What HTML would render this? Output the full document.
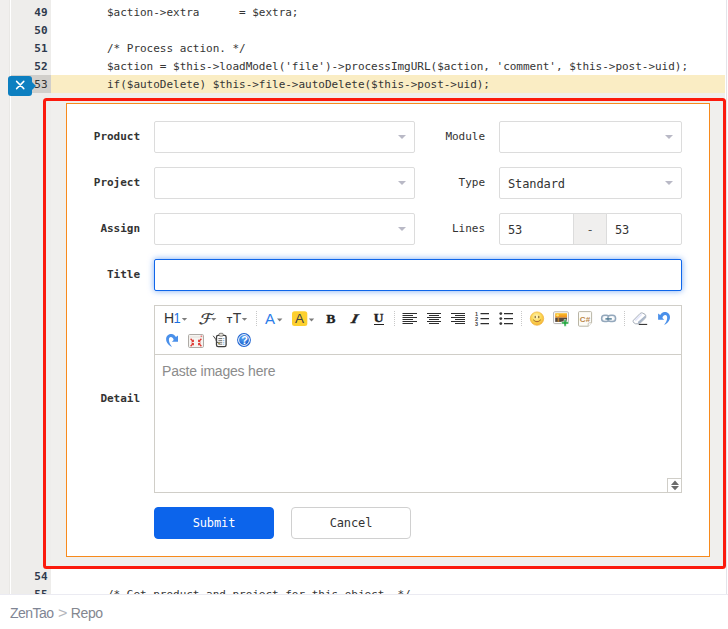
<!DOCTYPE html>
<html lang="en">
<head>
<meta charset="utf-8">
<title>ZenTao Repo</title>
<style>
*{box-sizing:border-box;margin:0;padding:0}
html,body{width:728px;height:629px;overflow:hidden;background:#fff}
body{position:relative;font-family:"DejaVu Sans Mono","Liberation Mono",monospace;font-size:11px;letter-spacing:-0.02px;color:#333}
.abs{position:absolute}
#code{position:absolute;left:0;top:0;width:728px;height:595px;overflow:hidden;background:#fff}
#strip{position:absolute;left:0;top:0;width:10px;height:595px;background:#f0efed;border-right:1px solid #e9e8e5}
#gutter{position:absolute;left:11px;top:0;width:40px;height:595px;background:#eeedeb}
#rborder{position:absolute;left:726px;top:0;width:1px;height:595px;background:#e4e4ea}
#bborder{position:absolute;left:0;top:594px;width:728px;height:1px;background:#ebebf2}
.row{position:absolute;left:0;width:725px;height:18px;line-height:18px;white-space:pre}
.row .n{position:absolute;left:11px;width:40px;padding-right:3.5px;text-align:right;font-weight:bold;color:#2e3a4d;height:18px;line-height:20px;overflow:hidden}
.row .c{position:absolute;left:107px;top:1px;color:#353535}
.row.hl .n{background:#d1cfcb;font-weight:normal;color:#333}
.row.hl .bg{position:absolute;left:51px;top:0;width:674px;height:18px;background:#faedc4}
#close{position:absolute;left:8px;top:76px;width:24px;height:20px;background:#0d7fc0;border-radius:3px}
#close:after{content:"";position:absolute;left:24px;top:6px;border-left:4px solid #0d7fc0;border-top:4px solid transparent;border-bottom:4px solid transparent}
#widget{position:absolute;left:51px;top:93px;width:674px;height:474px;background:#f0efed}
#red{position:absolute;left:43px;top:98px;width:683px;height:471px;border:3px solid #fb1a0d;border-radius:3.5px}
#form{position:absolute;left:66px;top:103px;width:644px;height:454px;background:#fff;border:1px solid #f78a1c}
.lbl{position:absolute;text-align:right;height:32px;line-height:31px;color:#333}
.ctl{position:absolute;height:32px;border:1px solid #dcdcdc;border-radius:2px;background:#fff;line-height:32px;padding-left:8px;color:#333;font-size:12px;letter-spacing:-0.1px}
.caret{position:absolute;right:8px;top:13px;border-top:4px solid #b9b9c6;border-left:4px solid transparent;border-right:4px solid transparent}
.lbl.b{font-weight:bold}
.lbl{font-weight:normal}
.ctl.addon{background:#f0efee;border-radius:0;padding:0;text-align:center;color:#555}
.ctl.title{border-color:#0f66ea;box-shadow:0 0 6px rgba(12,100,235,.55)}
#editor{position:absolute;left:154px;top:305px;width:528px;height:188px;border:1px solid #d0cec8;background:#fff}
#tb{position:absolute;left:0;top:0;width:526px;height:49px;border-bottom:1px solid #d0cec8;background:#fff}
#ph{position:absolute;left:7px;top:55px;font-family:"Liberation Sans",sans-serif;font-size:14px;letter-spacing:-0.2px;line-height:20px;color:#8c8c8c}
#rs{position:absolute;right:0;bottom:0;width:14px;height:14px;border-left:1px solid #d0cec8;border-top:1px solid #d0cec8;background:#fff}
.btn{position:absolute;width:120px;height:32px;line-height:31px;text-align:center;border:1px solid #d0d0d0;border-radius:4px;background:#fff;color:#333;font-size:12px;letter-spacing:-0.1px}
.btn.primary{background:#0c64eb;border-color:#0c64eb;color:#fff}
#foot{position:absolute;left:10px;top:604px;font-family:"Liberation Sans",sans-serif;font-size:14px;line-height:18px;color:#84878f;letter-spacing:-0.35px;white-space:pre}
#foot i{font-style:normal;color:#b4b6bc;margin-right:1.6px;display:inline-block;transform:scaleX(1.15);transform-origin:0 50%}
#foot b{font-weight:normal;letter-spacing:-0.55px;color:#7f8594;margin-right:0.8px}
</style>
</head>
<body>
<div id="code">
  <div id="strip"></div>
  <div id="gutter"></div>
  <div class="row" style="top:3px"><span class="n">49</span><span class="c">$action-&gt;extra      = $extra;</span></div>
  <div class="row" style="top:21px"><span class="n">50</span></div>
  <div class="row" style="top:39px"><span class="n">51</span><span class="c">/* Process action. */</span></div>
  <div class="row" style="top:57px"><span class="n">52</span><span class="c">$action = $this-&gt;loadModel('file')-&gt;processImgURL($action, 'comment', $this-&gt;post-&gt;uid);</span></div>
  <div class="row hl" style="top:75px"><span class="bg"></span><span class="n">53</span><span class="c">if($autoDelete) $this-&gt;file-&gt;autoDelete($this-&gt;post-&gt;uid);</span></div>
  <div id="widget"></div>
  <div class="row" style="top:567px"><span class="n">54</span></div>
  <div class="row" style="top:585px"><span class="n">55</span><span class="c">/* Get product and project for this object. */</span></div>
  <div id="rborder"></div>
  <div id="bborder"></div>
  <div id="close"><svg width="24" height="20" viewBox="0 0 24 20"><path d="M8.6 5.4 L15.8 12.6 M15.8 5.4 L8.6 12.6" stroke="#fff" stroke-width="1.5" fill="none" stroke-linecap="round"/></svg></div>
  <div id="form"></div>
  <div class="lbl b" style="left:80px;width:60px;top:121px">Product</div>
  <div class="ctl" style="left:154px;width:261px;top:121px"><i class="caret"></i></div>
  <div class="lbl b" style="left:80px;width:60px;top:167px">Project</div>
  <div class="ctl" style="left:154px;width:261px;top:167px"><i class="caret"></i></div>
  <div class="lbl b" style="left:80px;width:60px;top:213px">Assign</div>
  <div class="ctl" style="left:154px;width:261px;top:213px"><i class="caret"></i></div>
  <div class="lbl" style="left:425px;width:60px;top:121px">Module</div>
  <div class="ctl" style="left:499px;width:183px;top:121px"><i class="caret"></i></div>
  <div class="lbl" style="left:425px;width:60px;top:167px">Type</div>
  <div class="ctl" style="left:499px;width:183px;top:167px">Standard<i class="caret"></i></div>
  <div class="lbl" style="left:425px;width:60px;top:213px">Lines</div>
  <div class="ctl" style="left:499px;width:75px;top:213px;border-radius:2px 0 0 2px">53</div>
  <div class="ctl addon" style="left:573px;width:34px;top:213px">-</div>
  <div class="ctl" style="left:606px;width:76px;top:213px;border-radius:0 2px 2px 0">53</div>
  <div class="lbl b" style="left:80px;width:60px;top:259px">Title</div>
  <div class="ctl title" style="left:154px;width:528px;top:259px"></div>
  <div class="lbl b" style="left:80px;width:60px;top:383px">Detail</div>
  <div id="editor">
    <div id="tb"><svg width="526" height="50" viewBox="155 306 526 50" style="position:absolute;left:0;top:0">
<defs>
<path id="dd" d="M-0.2 0 H5.2 L2.5 2.8 Z" fill="#7c7c7c"/>
<radialGradient id="gs" cx="0.45" cy="0.35" r="0.7"><stop offset="0" stop-color="#fff8c8"/><stop offset="0.5" stop-color="#fcd957"/><stop offset="1" stop-color="#f3ae30"/></radialGradient>
<linearGradient id="gsun" x1="0" y1="0" x2="0" y2="1"><stop offset="0" stop-color="#f9c12d"/><stop offset="1" stop-color="#f08a1c"/></linearGradient>
<radialGradient id="gh" cx="0.4" cy="0.3" r="0.8"><stop offset="0" stop-color="#5aa5f5"/><stop offset="1" stop-color="#0f56c8"/></radialGradient>
</defs>
<g font-family="Liberation Sans, sans-serif" letter-spacing="0">
<!-- H1 -->
<text x="164" y="323.3" font-size="14" fill="#303030">H</text><text x="0" y="0" font-size="14" fill="#1a6fe0" transform="translate(173.6 323.3) scale(0.92 1.003)">1</text>
<use href="#dd" x="182" y="318"/>
<!-- font family -->
<text x="0" y="0" font-size="14.5" font-family="DejaVu Sans, Liberation Serif, serif" fill="#333" stroke="#333" stroke-width="0.3" transform="translate(198.6 323.6) skewX(-16) scale(1.12 1)">&#x2131;</text>
<use href="#dd" x="211.2" y="318"/>
<!-- font size -->
<text x="226.8" y="323.3" font-size="9" font-weight="bold" fill="#3a3a3a">T</text><text x="232.8" y="323.3" font-size="14" fill="#3a3a3a">T</text>
<use href="#dd" x="242" y="318"/>
<!-- fore color -->
<text x="265" y="323.8" font-size="15" fill="#2b7de9">A</text>
<use href="#dd" x="277.2" y="318.6"/>
<!-- hilite -->
<rect x="292" y="311.3" width="15.3" height="14.6" rx="2.5" fill="#fdd02e"/>
<text x="295" y="323.4" font-size="13.5" fill="#444">A</text>
<use href="#dd" x="309" y="318.6"/>
</g>
<g font-family="Liberation Serif, serif" font-weight="bold" fill="#222" stroke="#222" stroke-width="0.35" letter-spacing="0">
<text x="0" y="0" font-size="13" transform="translate(326.2 323) scale(1.06 1)">B</text>
<text x="0" y="0" font-size="13" font-style="italic" transform="translate(350.6 323) skewX(-14) scale(1.25 1)">I</text>
<text x="0" y="0" font-size="12.5" transform="translate(373.8 322.4) scale(1.08 1)">U</text>
<rect x="374" y="324" width="10" height="1" fill="#222" stroke="none"/>
</g>
<!-- separators -->
<g stroke="#c8c8c8" stroke-width="1" stroke-dasharray="1 1">
<path d="M256.5 311 V327 M394.5 311 V327 M521.5 311 V327 M624.5 311 V327"/>
</g>
<!-- align -->
<g stroke="#2e2e2e" stroke-width="1">
<path d="M402.5 313.5 H417 M402.5 315.5 H413 M402.5 317.5 H417 M402.5 319.5 H413 M402.5 321.5 H417 M402.5 323.5 H413"/>
<path d="M427 313.5 H441 M429 315.5 H439 M427 317.5 H441 M429 319.5 H439 M427 321.5 H441 M429 323.5 H439"/>
<path d="M451 313.5 H465 M455 315.5 H465 M451 317.5 H465 M455 319.5 H465 M451 321.5 H465 M455 323.5 H465"/>
</g>
<!-- lists -->
<g stroke="#2e2e2e" stroke-width="1.4">
<path d="M480.5 313.6 H489 M480.5 318.6 H489 M480.5 323.6 H489"/>
<path d="M504 313.6 H513 M504 318.6 H513 M504 323.6 H513"/>
</g>
<g font-family="Liberation Sans, sans-serif" font-size="5.5" font-weight="bold" fill="#444" letter-spacing="0">
<text x="475" y="315.6">1</text><text x="475" y="320.6">2</text><text x="475" y="325.6">3</text>
</g>
<g fill="#3a3a3a"><circle cx="500.8" cy="313.6" r="1.4"/><circle cx="500.8" cy="318.6" r="1.4"/><circle cx="500.8" cy="323.6" r="1.4"/></g>
<!-- smiley -->
<circle cx="537" cy="318.6" r="6.7" fill="url(#gs)" stroke="#f0b23c" stroke-width="0.7"/>
<ellipse cx="535.2" cy="317" rx="0.55" ry="1.2" fill="#6a4a20"/><ellipse cx="538.8" cy="317" rx="0.55" ry="1.2" fill="#6a4a20"/>
<path d="M533.4 320 Q537 323.8 540.6 320" fill="none" stroke="#8a5a1a" stroke-width="0.8" stroke-linecap="round"/>
<rect x="536.6" y="321.3" width="1.3" height="0.8" rx="0.4" fill="#c8405a"/>
<!-- image -->
<rect x="553.6" y="311.8" width="14.8" height="11.8" rx="1" fill="#fff" stroke="#b4b4b4"/>
<rect x="555.2" y="313.2" width="11.8" height="4.5" fill="url(#gsun)"/>
<circle cx="557.6" cy="315.2" r="1.3" fill="#fde46a"/>
<rect x="555.2" y="317.7" width="11.8" height="4.2" fill="#54463c"/>
<rect x="557.6" y="317.9" width="1.6" height="4" fill="#b8802e"/>
<path d="M561.6 321.8 H564 V319.6 H566.2 V321.8 H568.6 V324 H566.2 V326.2 H564 V324 H561.6 Z" fill="#27a844" stroke="#fff" stroke-width="0.5"/>
<!-- code -->
<path d="M578.5 312.6 Q578.5 311.6 579.5 311.6 H590.6 Q591.6 311.6 591.6 312.6 V322.8 L588.2 326.2 H579.5 Q578.5 326.2 578.5 325.2 Z" fill="#fdfcf7" stroke="#b9b5a6"/>
<path d="M588.2 326.2 V323.8 Q588.2 322.8 589.2 322.8 H591.6" fill="#fff" stroke="#b9b5a6" stroke-width="0.8"/>
<text x="579.8" y="321.6" font-family="Liberation Sans, sans-serif" font-weight="bold" font-size="8" fill="#bb8748" letter-spacing="0.3">C#</text>
<!-- link -->
<g fill="#f3f6f9" stroke="#94a8bc" stroke-width="1.5">
<rect x="601.6" y="315.3" width="7.8" height="6.2" rx="3.1"/>
<rect x="607.8" y="315.3" width="7.8" height="6.2" rx="3.1"/>
</g>
<rect x="603.6" y="317.3" width="3.6" height="2.2" rx="1.1" fill="#fff"/><rect x="610" y="317.3" width="3.6" height="2.2" rx="1.1" fill="#fff"/>
<path d="M605.4 318.9 H611.8" stroke="#3f6f88" stroke-width="1.3"/>
<!-- eraser -->
<path d="M633.4 320.3 L640.2 313.4 Q641.2 312.6 642.4 313 L645 314.3 Q645.9 314.9 645.8 316 L645.7 317.8 L639.4 323.8 H635.6 L633.6 322.6 Q632.7 321.5 633.4 320.3 Z" fill="#fff" stroke="#8e98a6" stroke-width="0.8"/>
<path d="M638.4 321.4 L645.5 315.2 L645.5 317.7 L639.3 323.5 L637.6 323.5 Z" fill="#a9b6c8"/>
<path d="M635.2 320.6 L641.6 314.2" stroke="#e3e6fa" stroke-width="1.6"/>
<path d="M638.8 324.4 H647.2" stroke="#222" stroke-width="1"/>
<!-- undo -->
<path d="M171.3 346.7 C167.6 344.6 165.9 341.6 166.1 339 C166.3 335.6 169 333.8 171.6 334 C173.6 334.2 175.1 335.4 175.9 337.1 L178 335.6 L178 341.8 L171.9 341.8 L173.7 339.9 C173.1 338.1 172.1 337.1 170.9 337.1 C169.6 337.1 168.8 338.4 168.9 340 C169.1 342.5 170.1 344.8 171.8 346.4 Z" fill="#4a90ea" transform="translate(836.1 -22) scale(-1 1)"/>
<!-- redo -->
<path d="M171.3 346.7 C167.6 344.6 165.9 341.6 166.1 339 C166.3 335.6 169 333.8 171.6 334 C173.6 334.2 175.1 335.4 175.9 337.1 L178 335.6 L178 341.8 L171.9 341.8 L173.7 339.9 C173.1 338.1 172.1 337.1 170.9 337.1 C169.6 337.1 168.8 338.4 168.9 340 C169.1 342.5 170.1 344.8 171.8 346.4 Z" fill="#4a90ea"/>
<!-- fullscreen -->
<rect x="188.5" y="334.5" width="15" height="13" rx="1.2" fill="#f6f4f1" stroke="#aeaba6"/>
<path d="M189.5 337 H202.5" stroke="#e2dfda" stroke-width="1"/>
<rect x="200.6" y="335.6" width="1.6" height="1.2" fill="#e26060"/>
<g fill="#df3a34">
<path id="fsa" d="M193.9 342.1 L194 339.2 L193 340.2 L191.1 338.3 L190.1 339.3 L192 341.2 L191 342.2 Z"/>
<use href="#fsa" transform="translate(392 0) scale(-1 1)"/>
<use href="#fsa" transform="translate(0 685) scale(1 -1)"/>
<use href="#fsa" transform="translate(392 685) scale(-1 -1)"/>
</g>
<!-- clipboard -->
<rect x="216.5" y="335.3" width="9.6" height="11.3" rx="1.6" fill="#fff" stroke="#3c3c3c" stroke-width="1.3"/>
<rect x="219" y="333.3" width="4.2" height="2.8" rx="1" fill="#e4e1da" stroke="#5a5852" stroke-width="0.7"/>
<path d="M218.4 338.5 H222.3 M218.4 340.4 H222.3 M218.4 342.3 H222.3 M218.4 344.2 H222.3" stroke="#6a6a6a" stroke-width="0.9"/>
<path d="M223.3 338.5 H224.3 M223.3 340.4 H224.3 M223.3 342.3 H224.3 M223.3 344.2 H224.3" stroke="#4a9ae0" stroke-width="0.9"/>
<path d="M213.2 335.8 L215.8 339.4 L216.6 341.8 L219.2 343.4" fill="none" stroke="#4a4a48" stroke-width="1"/>
<rect x="218.4" y="342.8" width="1.4" height="1.2" fill="#a89a30"/>
<!-- help -->
<circle cx="244" cy="340" r="6.9" fill="#1d63d2"/>
<circle cx="244" cy="340" r="5.4" fill="url(#gh)" stroke="#fff" stroke-width="1"/>
<text x="241.3" y="344" font-family="Liberation Sans, sans-serif" font-weight="bold" font-size="11" fill="#fff" letter-spacing="0">?</text>
</svg></div>
    <div id="ph">Paste images here</div>
    <div id="rs"><svg width="13" height="13" viewBox="0 0 13 13" style="display:block"><path d="M3 6 L7 1.6 L11 6 Z M3 7 L7 11.2 L11 7 Z" fill="#6b6b6b"/></svg></div>
  </div>
  <div class="btn primary" style="left:154px;top:507px">Submit</div>
  <div class="btn" style="left:291px;top:507px">Cancel</div>
  <div id="red"></div>
</div>
<div id="foot"><b>ZenTao</b> <i>&gt;</i> Repo</div>
</body>
</html>
